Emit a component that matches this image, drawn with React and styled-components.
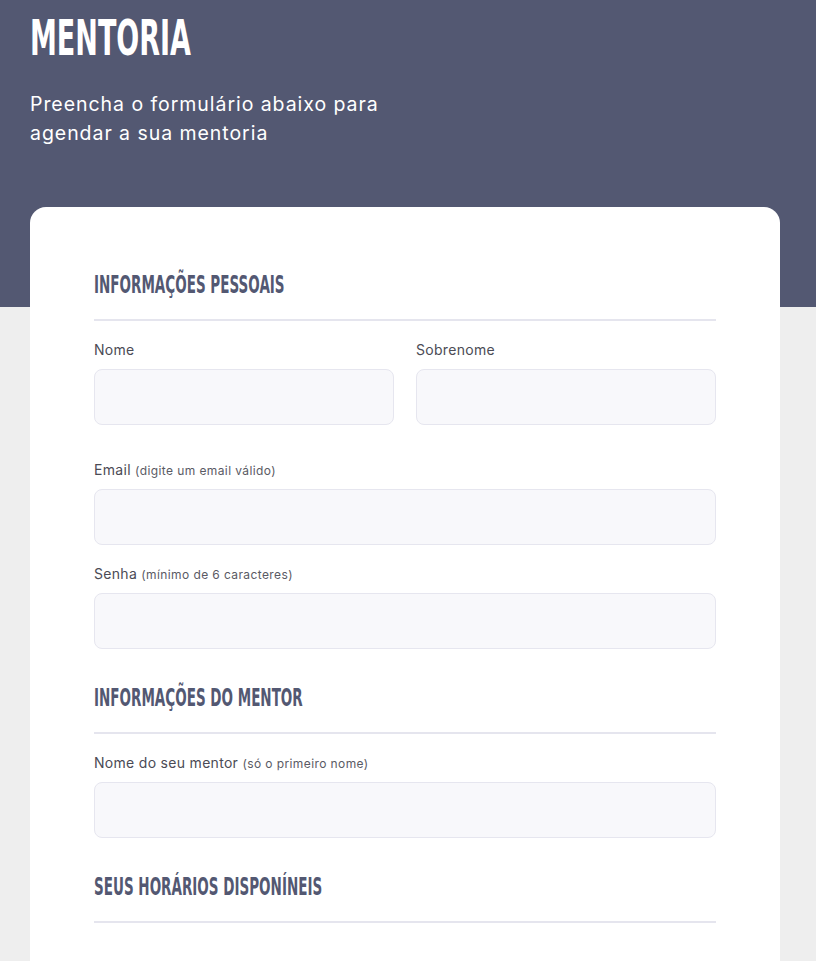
import styled, { createGlobalStyle } from "styled-components";

const GlobalStyle = createGlobalStyle`
  * { box-sizing: border-box; }
  body {
    margin: 0;
    background: #eeeeee;
    font-family: "Inter", "Noto Sans", sans-serif;
  }
`;

const Page = styled.div`
  min-height: 961px;
  background: linear-gradient(to bottom, #535872 0, #535872 307px, #eeeeee 307px);
`;

const Header = styled.header`
  padding: 12px 30px 0;
  height: 207px;
`;

// bold face squeezed horizontally to mimic Bebas Neue
const Display = styled.span`
  display: block;
  width: max-content;
  font-family: "DejaVu Sans", sans-serif;
  font-weight: 700;
  transform: scaleX(${(p) => p.$squeeze || 0.55});
  transform-origin: left center;
  white-space: nowrap;
`;

const Title = styled.h1`
  margin: 0;
  font-size: 50px;
  line-height: 52px;
  color: #ffffff;
`;

const Subtitle = styled.p`
  margin: 26px 0 0;
  max-width: 380px;
  font-family: "Inter", "Noto Sans", sans-serif;
  font-size: 19.5px;
  line-height: 29px;
  letter-spacing: 0.95px;
  color: #ffffff;
`;

const Card = styled.main`
  margin: 0 36px 0 30px;
  background: #ffffff;
  border-radius: 16px 16px 0 0;
  padding: 63px 64px 60px;
`;

const SectionTitle = styled.h2`
  margin: ${(p) => (p.$first ? "0" : "34px 0 0")};
  padding-bottom: 19px;
  border-bottom: 2px solid #e5e5ee;
  font-size: 25px;
  line-height: 30px;
  color: #535872;
`;

const Row = styled.div`
  display: grid;
  grid-template-columns: 1fr 1fr;
  gap: 22px;
  margin-bottom: 34px;
`;

const Field = styled.div`
  margin-top: 18px;
`;

const Label = styled.label`
  display: block;
  margin-bottom: 9px;
  font-size: 14px;
  line-height: 21px;
  letter-spacing: 0.3px;
  color: #4b4b55;
`;

const Hint = styled.span`
  font-size: 12px;
  line-height: 1;
  letter-spacing: 0.4px;
  color: #5a5a64;
`;

const Input = styled.input`
  display: block;
  width: 100%;
  height: 56px;
  border: 1px solid #e6e6ef;
  border-radius: 8px;
  background: #f8f8fb;
  padding: 0 14px;
  font: inherit;
  outline: none;
`;

const TextField = ({ label, hint, type = "text" }) => (
  <Field>
    <Label>
      {label} {hint && <Hint>({hint})</Hint>}
    </Label>
    <Input type={type} />
  </Field>
);

const Section = ({ first, children }) => (
  <SectionTitle $first={first}>
    <Display $squeeze={0.54}>{children}</Display>
  </SectionTitle>
);

export default function App() {
  return (
    <>
      <GlobalStyle />
      <Page>
        <Header>
          <Title>
            <Display $squeeze={0.54}>MENTORIA</Display>
          </Title>
          <Subtitle>Preencha o formulário abaixo para agendar a sua mentoria</Subtitle>
        </Header>
        <Card>
          <Section first>INFORMAÇÕES PESSOAIS</Section>
          <Row>
            <TextField label="Nome" />
            <TextField label="Sobrenome" />
          </Row>
          <TextField label="Email" hint="digite um email válido" type="email" />
          <TextField label="Senha" hint="mínimo de 6 caracteres" type="password" />

          <Section>INFORMAÇÕES DO MENTOR</Section>
          <TextField label="Nome do seu mentor" hint="só o primeiro nome" />

          <Section>SEUS HORÁRIOS DISPONÍNEIS</Section>
        </Card>
      </Page>
    </>
  );
}
